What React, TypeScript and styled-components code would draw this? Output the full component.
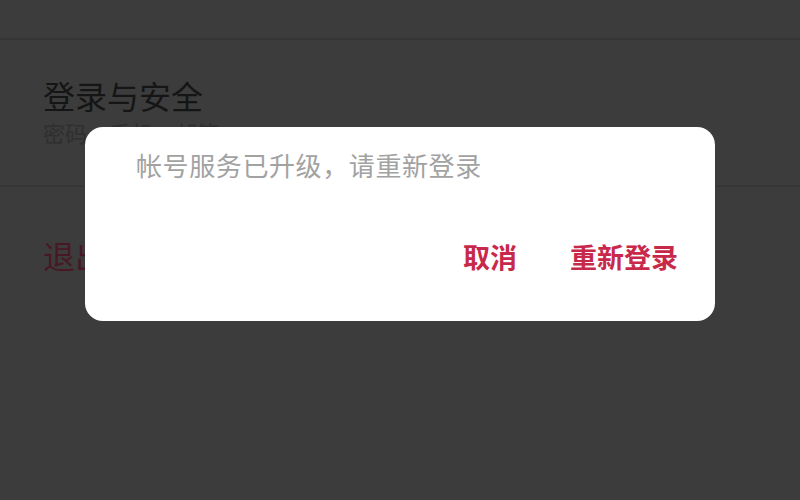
import React from "react";
import styled, { createGlobalStyle } from "styled-components";

const Global = createGlobalStyle`
  html, body { margin: 0; padding: 0; }
  body { font-family: "Noto Sans CJK SC", "Noto Sans", sans-serif; background: #3c3c3c; }
`;

const Page = styled.div`
  position: relative;
  width: 800px;
  height: 500px;
  overflow: hidden;
  background: #3c3c3c;
  display: flex;
  flex-direction: column;
`;

const TopBar = styled.div`
  height: 38px;
  border-bottom: 2px solid #353535;
`;

const Section = styled.div<{ $h: number; $divider?: boolean; $top: number }>`
  height: ${(p) => p.$h}px;
  padding: ${(p) => p.$top}px 43px 0;
  display: flex;
  flex-direction: column;
  border-bottom: ${(p) => (p.$divider ? "2px solid #363636" : "none")};
  box-sizing: border-box;
`;

const Title = styled.div<{ $color: string }>`
  font-size: 32px;
  line-height: 34px;
  color: ${(p) => p.$color};
`;

const Sub = styled.div`
  font-size: 22px;
  line-height: 26px;
  color: #2f2f2f;
  margin-top: 7px;
`;

const Dialog = styled.div`
  position: absolute;
  left: 85px;
  top: 127px;
  width: 630px;
  height: 194px;
  background: #fff;
  border-radius: 18px;
  box-sizing: border-box;
  padding: 20px 37px 0 51px;
  display: flex;
  flex-direction: column;
`;

const Message = styled.div`
  font-size: 26px;
  line-height: 36px;
  letter-spacing: 0.6px;
  color: #a2a2a2;
`;

const Actions = styled.div`
  display: flex;
  justify-content: flex-end;
  gap: 53px;
  margin-top: 56px;
`;

const Action = styled.div`
  font-size: 27px;
  line-height: 36px;
  font-weight: 700;
  color: #c8284a;
`;

export default function App() {
  return (
    <Page>
      <Global />
      <TopBar />
      <Section $h={147} $top={38} $divider>
        <Title $color="#151515">登录与安全</Title>
        <Sub>密码、手机、邮箱</Sub>
      </Section>
      <Section $h={146} $top={51}>
        <Title $color="#481925">退出登录</Title>
      </Section>
      <Dialog>
        <Message>帐号服务已升级，请重新登录</Message>
        <Actions>
          <Action>取消</Action>
          <Action>重新登录</Action>
        </Actions>
      </Dialog>
    </Page>
  );
}
